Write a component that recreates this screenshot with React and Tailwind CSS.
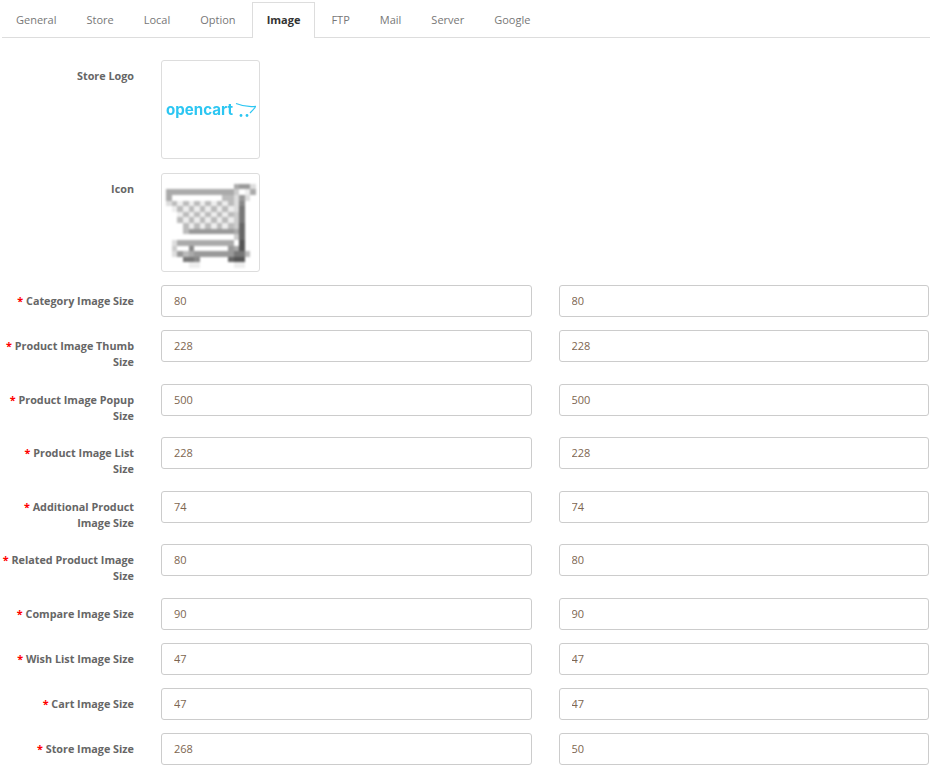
import React from 'react';

const tabs = ['General', 'Store', 'Local', 'Option', 'Image', 'FTP', 'Mail', 'Server', 'Google'];

const sizes = [
  { label: 'Category Image Size', w: '80', h: '80' },
  { label: 'Product Image Thumb Size', w: '228', h: '228' },
  { label: 'Product Image Popup Size', w: '500', h: '500' },
  { label: 'Product Image List Size', w: '228', h: '228' },
  { label: 'Additional Product Image Size', w: '74', h: '74' },
  { label: 'Related Product Image Size', w: '80', h: '80' },
  { label: 'Compare Image Size', w: '90', h: '90' },
  { label: 'Wish List Image Size', w: '47', h: '47' },
  { label: 'Cart Image Size', w: '47', h: '47' },
  { label: 'Store Image Size', w: '268', h: '50' },
];

// 16x16 favicon, one hex digit of grey per pixel
const cart = [
  'ffffffffffffffff',
  'ffffffffffffa99d',
  'aaaaaaaaaaaacfea',
  'afffffffffbbd9df',
  'dbebebebebebd8ff',
  'febebebebebed7ff',
  'ffebebebebebc7ff',
  'ffbebebebebec7ff',
  'fffbebebebebc6ff',
  'fffb99999999a6ff',
  'ffffffffffffc6ff',
  'fdaaaaaaaaaaf5ff',
  'fcff8ffffff9a5ff',
  'fd9ba999999977bf',
  'fff778fffff655ff',
  'ffffeeffffffeeff',
];

function CartIcon() {
  return (
    <svg viewBox="0 0 16 16" className="w-[90px] h-[90px] shrink-0 blur-[1.2px]" shapeRendering="crispEdges">
      {cart.flatMap((row, y) =>
        row.split('').map((d, x) => (
          <rect key={`${x}-${y}`} x={x} y={y} width="1.02" height="1.02" fill={`#${d}${d}${d}`} />
        ))
      )}
    </svg>
  );
}

function OpencartLogo() {
  return (
    <svg viewBox="0 0 90 24" className="w-[90px] h-[24px] shrink-0 self-center blur-[0.3px]">
      <text x="0" y="17" textLength="67" lengthAdjust="spacingAndGlyphs" fill="#2cc6f2" fontSize="15" fontWeight="700" fontFamily="Inter, 'Open Sans', sans-serif">opencart</text>
      <path d="M70 5.5C76 8 84 9 90 8.3C88 11 86 13 84 15" fill="none" stroke="#2cc6f2" strokeWidth="1.2" />
      <circle cx="75" cy="17.5" r="1.4" fill="#2cc6f2" />
      <circle cx="81" cy="17.5" r="1.4" fill="#2cc6f2" />
    </svg>
  );
}

function Thumb({ children }) {
  return (
    <div className="w-[99px] h-[99px] p-1 border border-[#dddddd] rounded-[3px] flex items-start justify-start bg-white overflow-hidden">
      {children}
    </div>
  );
}

function SizeInput({ value }) {
  return (
    <input
      readOnly
      value={value}
      className="w-full min-w-0 h-8 px-3 pb-px border border-[#cccccc] rounded-[3px] bg-white text-[11px] text-[#7d6650] outline-none font-['Open_Sans',sans-serif]"
    />
  );
}

export default function App() {
  return (
    <div className="w-[938px] h-[779px] bg-white pt-[2px] pr-2 font-['Open_Sans',sans-serif] text-[11px] overflow-hidden">
      <ul className="ml-[2px] flex gap-[2px] h-9 border-b border-[#dddddd]">
        {tabs.map((t) => (
          <li
            key={t}
            className={
              t === 'Image'
                ? 'h-9 px-[14px] flex items-center border border-b-0 border-[#dddddd] bg-white font-bold text-[#333333]'
                : 'h-9 px-[13px] flex items-center border border-transparent text-[#777777]'
            }
          >
            {t}
          </li>
        ))}
      </ul>

      <div className="mt-[22px] flex flex-col gap-[13px]">
        <div className="flex mb-px">
          <label className="ml-[2px] w-[132px] pt-2 text-right text-[10.8px] font-bold text-[#666666] leading-[16.25px]">Store Logo</label>
          <div className="ml-[27px]">
            <Thumb><OpencartLogo /></Thumb>
          </div>
        </div>
        <div className="flex">
          <label className="ml-[2px] w-[132px] pt-2 text-right text-[10.8px] font-bold text-[#666666] leading-[16.25px]">Icon</label>
          <div className="ml-[27px]">
            <Thumb><CartIcon /></Thumb>
          </div>
        </div>

        {sizes.map((s) => (
          <div key={s.label} className="flex">
            <label className="ml-[2px] w-[132px] pt-2 text-right text-[10.8px] font-bold text-[#666666] leading-[16.25px]">
              <span className="text-[#ff0000]">* </span>
              {s.label}
            </label>
            <div className="ml-[27px] flex-1 flex gap-[27px] pr-px">
              <SizeInput value={s.w} />
              <SizeInput value={s.h} />
            </div>
          </div>
        ))}
      </div>
    </div>
  );
}
